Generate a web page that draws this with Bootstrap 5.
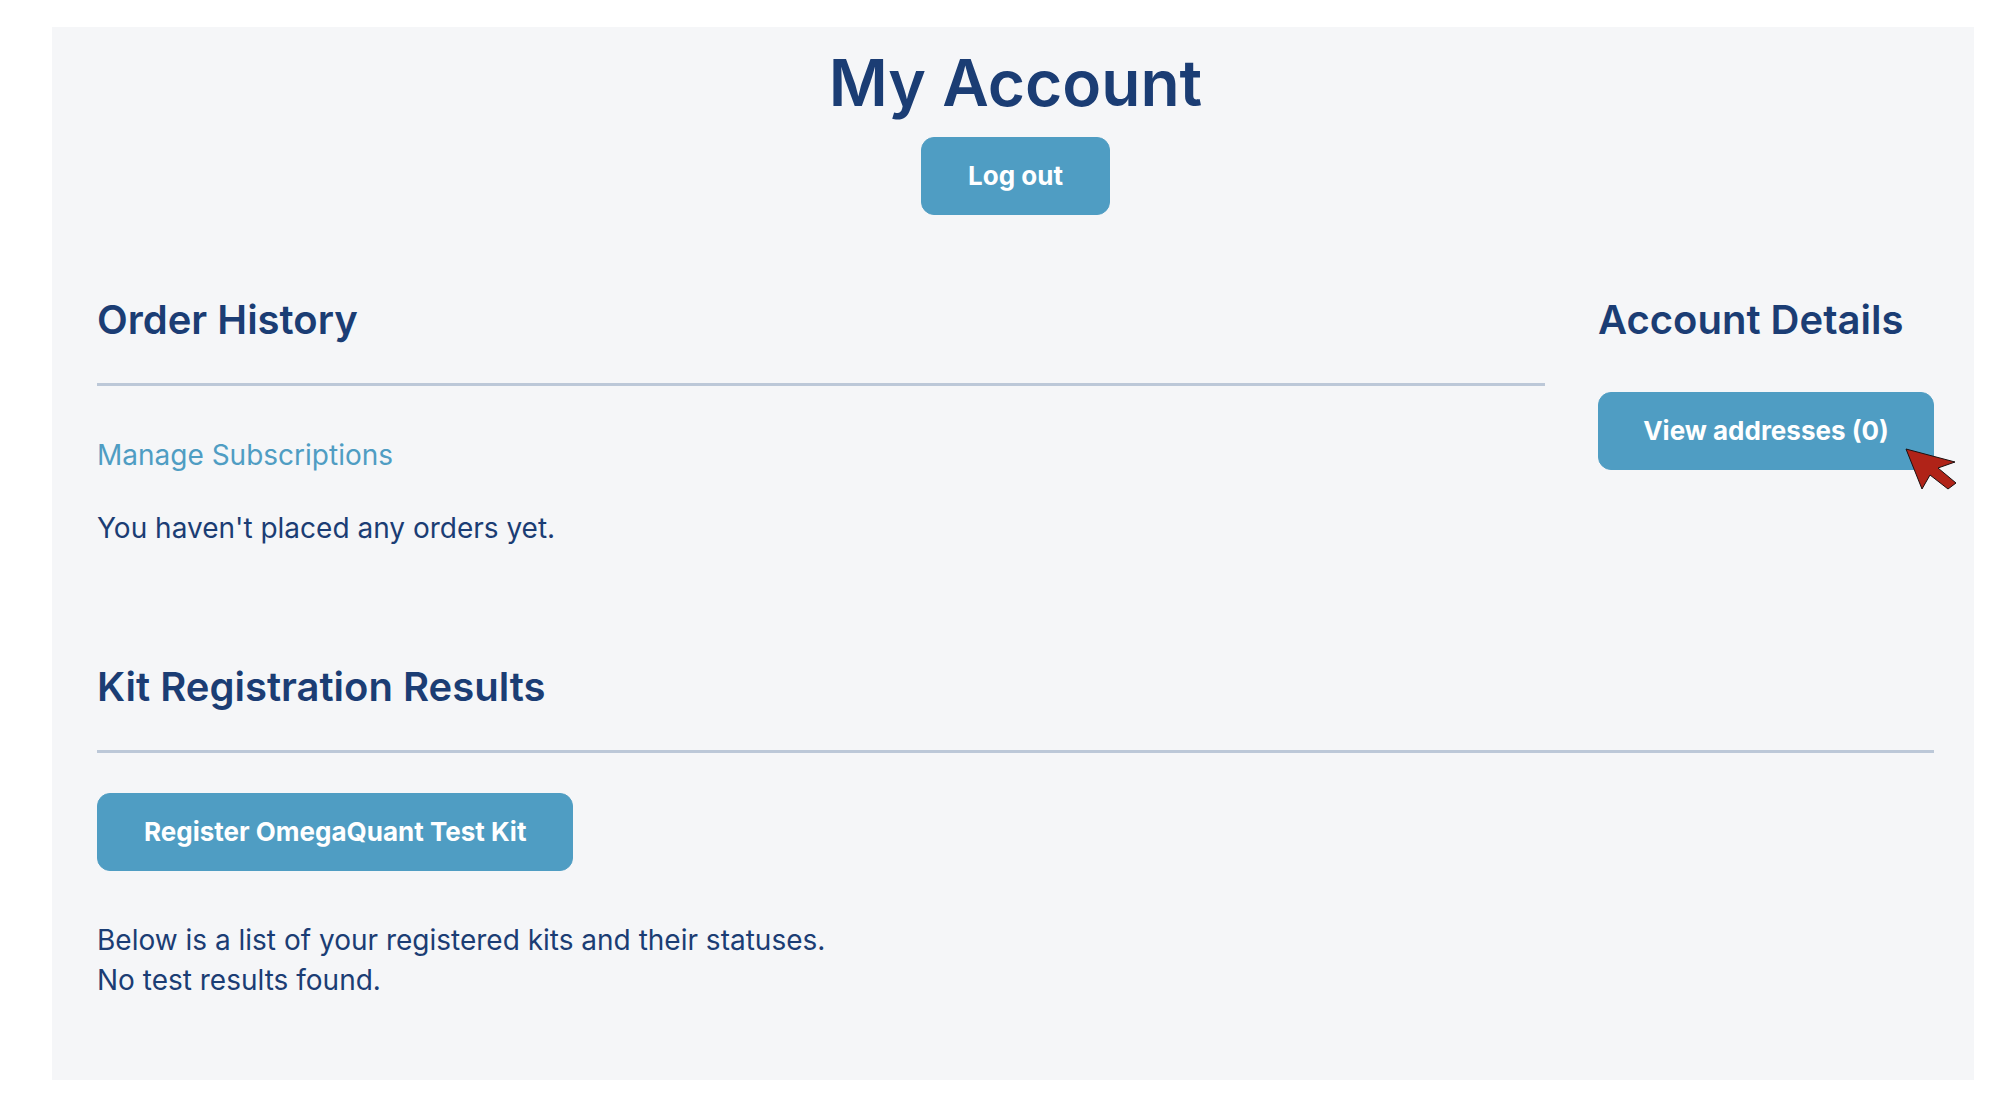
<!DOCTYPE html>
<html lang="en">
<head>
<meta charset="utf-8">
<meta name="viewport" content="width=device-width, initial-scale=1">
<title>My Account</title>
<link href="https://cdn.jsdelivr.net/npm/bootstrap@5.3.0/dist/css/bootstrap.min.css" rel="stylesheet">
<style>
  body { font-family: Inter, "Open Sans", sans-serif; font-size: 28px; line-height: 40px; color: #1b3d74; background: #fff; }
  .account-shell { padding: 27px 28px 26px 52px; }
  .account-panel { background: #f5f6f8; padding: 20px 40px 80px 45px; }
  .account-title { font-size: 64px; line-height: 72px; font-weight: 600; margin-bottom: 18px; }
  .section-title { font-size: 40px; line-height: 48px; font-weight: 600; margin: 0; }
  .btn-account {
    --bs-btn-color: #fff; --bs-btn-bg: #4f9dc3; --bs-btn-border-color: #4f9dc3;
    --bs-btn-hover-color: #fff; --bs-btn-hover-bg: #3f8cb2; --bs-btn-hover-border-color: #3f8cb2;
    --bs-btn-padding-x: 46px; --bs-btn-padding-y: 18px;
    --bs-btn-font-size: 26px; --bs-btn-font-weight: 700; --bs-btn-line-height: 40px;
    --bs-btn-border-radius: 13px;
  }
  .account-columns { gap: 53px; margin-top: 81px; }
  .account-side { flex: 0 0 336px; }
  .section-rule { border: 0; border-top: 3px solid #bcc8d8; opacity: 1; margin: 39px 0 0; }
  .account-link { color: #4f9dc3; }
  .order-list { margin-top: 49px; gap: 33px; }
  .kit-section { margin-top: 115px; }
  .kit-body { margin-top: 40px; gap: 49px; }
  .pointer-mark { right: -23px; bottom: -22px; width: 52px; height: 44px; pointer-events: none; }
</style>
</head>
<body>
<div class="account-shell">
  <main class="account-panel">
    <header class="d-flex flex-column align-items-center">
      <h1 class="account-title">My Account</h1>
      <button type="button" class="btn btn-account">Log out</button>
    </header>

    <div class="account-columns d-flex">
      <section class="flex-grow-1">
        <h2 class="section-title">Order History</h2>
        <hr class="section-rule">
        <div class="order-list d-flex flex-column">
          <p class="mb-0"><a href="#" class="account-link text-decoration-none">Manage Subscriptions</a></p>
          <p class="mb-0">You haven't placed any orders yet.</p>
        </div>
      </section>
      <aside class="account-side">
        <h2 class="section-title text-nowrap">Account Details</h2>
        <div class="position-relative mt-5">
          <button type="button" class="btn btn-account w-100 px-0 text-nowrap">View addresses (0)</button>
          <svg class="pointer-mark position-absolute" viewBox="0 0 52 44" aria-hidden="true">
            <path d="M1 1 L50 14 L33 20 L51 35 L43 41 L25 27 L17 41 Z" fill="#b02318" stroke="#1c1010" stroke-width="1" stroke-linejoin="round"/>
          </svg>
        </div>
      </aside>
    </div>

    <section class="kit-section">
      <h2 class="section-title">Kit Registration Results</h2>
      <hr class="section-rule">
      <div class="kit-body d-flex flex-column align-items-start">
        <button type="button" class="btn btn-account">Register OmegaQuant Test Kit</button>
        <div>
          <p class="mb-0">Below is a list of your registered kits and their statuses.</p>
          <p class="mb-0">No test results found.</p>
        </div>
      </div>
    </section>
  </main>
</div>
<script src="https://cdn.jsdelivr.net/npm/bootstrap@5.3.0/dist/js/bootstrap.bundle.min.js"></script>
</body>
</html>
